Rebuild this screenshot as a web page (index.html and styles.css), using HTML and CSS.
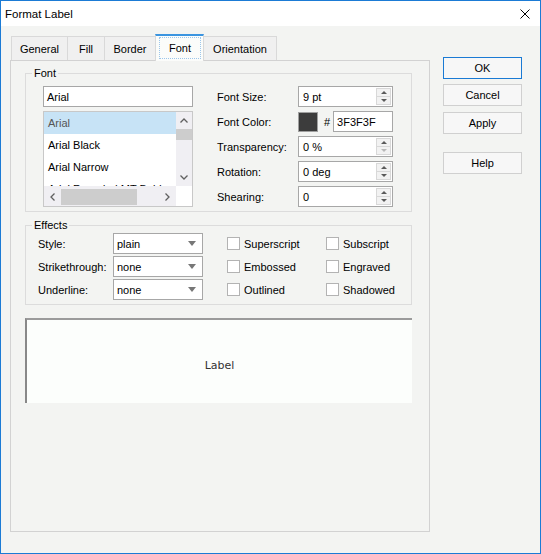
FILE: index.html
```html
<!DOCTYPE html>
<html>
<head>
<meta charset="utf-8">
<link rel="stylesheet" href="styles.css">
</head>
<body>
<div class="window">
  <div class="titlebar">
    <span class="title">Format Label</span>
    <svg class="close" width="10" height="10" viewBox="0 0 10 10"><path d="M0.5 0.5 L9.5 9.5 M9.5 0.5 L0.5 9.5" stroke="#000" stroke-width="1" fill="none"/></svg>
  </div>
  <div class="body">
    <div class="main">
      <div class="tabs">
        <div class="tab tab-general">General</div>
        <div class="tab tab-fill">Fill</div>
        <div class="tab tab-border">Border</div>
        <div class="tab tab-font active"><span class="focus">Font</span></div>
        <div class="tab tab-orient">Orientation</div>
      </div>
      <div class="panel">
        <div class="group group-font">
          <span class="group-title">Font</span>
          <div class="font-left">
            <div class="field">Arial</div>
            <div class="listbox">
              <div class="list-items">
                <div class="item selected">Arial</div>
                <div class="item">Arial Black</div>
                <div class="item">Arial Narrow</div>
                <div class="item">Arial Rounded MT Bold</div>
              </div>
              <div class="vscroll">
                <div class="sb-btn"><svg width="8" height="5" viewBox="0 0 8 5"><polyline points="0.5,4.5 4,1 7.5,4.5" fill="none" stroke="#606060" stroke-width="1.3"/></svg></div>
                <div class="vtrack"><div class="vthumb"></div></div>
                <div class="sb-btn"><svg width="8" height="5" viewBox="0 0 8 5"><polyline points="0.5,0.5 4,4 7.5,0.5" fill="none" stroke="#606060" stroke-width="1.3"/></svg></div>
              </div>
              <div class="hscroll">
                <div class="sb-hbtn"><svg width="5" height="8" viewBox="0 0 5 8"><polyline points="4.5,0.5 1,4 4.5,7.5" fill="none" stroke="#606060" stroke-width="1.3"/></svg></div>
                <div class="htrack"><div class="hthumb"></div></div>
                <div class="sb-hbtn"><svg width="5" height="8" viewBox="0 0 5 8"><polyline points="0.5,0.5 4,4 0.5,7.5" fill="none" stroke="#606060" stroke-width="1.3"/></svg></div>
              </div>
              <div class="corner"></div>
            </div>
          </div>
          <div class="font-right">
            <span class="lbl">Font Size:</span>
            <div class="field spin"><span>9 pt</span><span class="spin-btns"><span class="spin-btn"><span class="tri-up"></span></span><span class="spin-btn"><span class="tri-down"></span></span></span></div>
            <span class="lbl">Font Color:</span>
            <div class="color-row"><span class="swatch"></span><span class="hash">#</span><div class="field hex">3F3F3F</div></div>
            <span class="lbl">Transparency:</span>
            <div class="field spin"><span>0 %</span><span class="spin-btns"><span class="spin-btn"><span class="tri-up"></span></span><span class="spin-btn"><span class="tri-down disabled"></span></span></span></div>
            <span class="lbl">Rotation:</span>
            <div class="field spin"><span>0 deg</span><span class="spin-btns"><span class="spin-btn"><span class="tri-up"></span></span><span class="spin-btn"><span class="tri-down"></span></span></span></div>
            <span class="lbl">Shearing:</span>
            <div class="field spin"><span>0</span><span class="spin-btns"><span class="spin-btn"><span class="tri-up"></span></span><span class="spin-btn"><span class="tri-down"></span></span></span></div>
          </div>
        </div>
        <div class="group group-effects">
          <span class="group-title">Effects</span>
          <span class="lbl">Style:</span>
          <div class="field combo"><span>plain</span><span class="arrow"></span></div>
          <label class="check col3"><span class="box"></span>Superscript</label>
          <label class="check"><span class="box"></span>Subscript</label>
          <span class="lbl">Strikethrough:</span>
          <div class="field combo"><span>none</span><span class="arrow"></span></div>
          <label class="check col3"><span class="box"></span>Embossed</label>
          <label class="check"><span class="box"></span>Engraved</label>
          <span class="lbl">Underline:</span>
          <div class="field combo"><span>none</span><span class="arrow"></span></div>
          <label class="check col3"><span class="box"></span>Outlined</label>
          <label class="check"><span class="box"></span>Shadowed</label>
        </div>
        <div class="preview"><span>Label</span></div>
      </div>
    </div>
    <div class="side">
      <div class="btn btn-ok">OK</div>
      <div class="btn btn-cancel">Cancel</div>
      <div class="btn btn-apply">Apply</div>
      <div class="btn btn-help">Help</div>
    </div>
  </div>
</div>
</body>
</html>
```
FILE: styles.css
```css
html, body {
  margin: 0;
  padding: 0;
}
body {
  font-family: "Liberation Sans", Arial, sans-serif;
  font-size: 11px;
  color: #000;
}
.window {
  width: 541px;
  height: 554px;
  box-sizing: border-box;
  border: 1px solid #1b7bd5;
  background: #f3f4f2;
  display: flex;
  flex-direction: column;
}
.titlebar {
  height: 25px;
  flex: none;
  background: #fff;
  display: flex;
  align-items: center;
  justify-content: space-between;
  padding: 0 10px 0 4px;
}
.title {
  font-size: 11.5px;
}
.close {
  display: block;
}
.body {
  display: flex;
  padding: 8px 0 0 9px;
}
.main {
  width: 420px;
}
.tabs {
  display: flex;
  align-items: flex-end;
  height: 26px;
  padding-left: 1px;
  position: relative;
  z-index: 1;
}
.tab {
  height: 24px;
  box-sizing: border-box;
  border: 1px solid #d9d9d9;
  border-bottom: none;
  background: #f0f0f0;
  display: flex;
  align-items: center;
  justify-content: center;
  margin-left: -1px;
}
.tab:first-child {
  margin-left: 0;
}
.tab-general { width: 57px; }
.tab-fill { width: 38px; }
.tab-border { width: 52px; }
.tab-font { width: 49px; }
.tab-orient { width: 74px; }
.tab.active {
  height: 27px;
  margin-bottom: -1px;
  background: #fbfcfa;
  border-top: 2px solid #3b95e0;
  padding: 1px 2px 2px 3px;
  align-items: stretch;
}
.focus {
  flex: 1;
  border: 1px dotted #9cc6ec;
  display: flex;
  align-items: center;
  justify-content: center;
}
.panel {
  height: 472px;
  box-sizing: border-box;
  border: 1px solid #d2d2d2;
  padding: 12px 0 0 14px;
  background: #f3f4f2;
}
.group {
  position: relative;
  width: 387px;
  box-sizing: border-box;
  border: 1px solid #dcdcdc;
}
.group-title {
  position: absolute;
  left: 6px;
  top: -8px;
  line-height: 14px;
  padding: 0 2px;
  background: #f3f4f2;
}
.group-font {
  display: flex;
  gap: 24px;
  padding: 12px 0 4px 17px;
}
.font-left {
  width: 150px;
  display: flex;
  flex-direction: column;
  gap: 4px;
}
.field {
  height: 21px;
  box-sizing: border-box;
  border: 1px solid #a7a7a7;
  background: #fff;
  display: flex;
  align-items: center;
  padding-left: 3px;
  white-space: nowrap;
}
.listbox {
  height: 96px;
  box-sizing: border-box;
  border: 1px solid #c8c8c8;
  background: #fff;
  display: grid;
  grid-template-columns: 132px 16px;
  grid-template-rows: 74px 20px;
}
.list-items {
  overflow: hidden;
}
.item {
  height: 22px;
  line-height: 22px;
  padding-left: 4px;
  white-space: nowrap;
}
.item.selected {
  background: #c7e3f6;
  color: #555;
}
.vscroll {
  background: #f0eff3;
  display: flex;
  flex-direction: column;
}
.sb-btn {
  height: 17px;
  flex: none;
  display: flex;
  align-items: center;
  justify-content: center;
}
.sb-btn svg, .sb-hbtn svg {
  display: block;
}
.vtrack {
  flex: 1;
}
.vthumb {
  height: 11px;
  background: #cdcdcd;
}
.hscroll {
  background: #f0eff3;
  display: flex;
  align-items: stretch;
}
.sb-hbtn {
  width: 17px;
  flex: none;
  display: flex;
  align-items: center;
  justify-content: center;
  padding-top: 2px;
}
.htrack {
  flex: 1;
  padding-top: 3px;
}
.hthumb {
  margin-left: 0;
  width: 76px;
  height: 16px;
  background: #cdcdcd;
}
.corner {
  background: #fff;
}
.font-right {
  display: grid;
  grid-template-columns: 81px 95px;
  grid-auto-rows: 21px;
  row-gap: 4px;
  align-items: center;
}
.spin {
  justify-content: space-between;
  padding-left: 4px;
  padding-right: 1px;
}
.spin-btns {
  display: flex;
  flex-direction: column;
}
.spin-btn {
  width: 15px;
  height: 9px;
  box-sizing: border-box;
  border: 1px solid #d8d8d8;
  background: #f2f2f2;
  display: flex;
  align-items: center;
  justify-content: center;
}
.spin-btn + .spin-btn {
  margin-top: -1px;
}
.tri-up {
  width: 0;
  height: 0;
  border-left: 3px solid transparent;
  border-right: 3px solid transparent;
  border-bottom: 3px solid #5a5a5a;
}
.tri-down {
  width: 0;
  height: 0;
  border-left: 3px solid transparent;
  border-right: 3px solid transparent;
  border-top: 3px solid #5a5a5a;
}
.tri-down.disabled {
  border-top-color: #b8b8b8;
}
.color-row {
  display: flex;
  align-items: center;
}
.swatch {
  width: 20px;
  height: 20px;
  box-sizing: border-box;
  border: 1px solid #a0a0a0;
  background: #3c3c3c;
}
.hash {
  margin: 0 3px 0 6px;
}
.hex {
  width: 60px;
}
.group-effects {
  margin-top: 13px;
  display: grid;
  grid-template-columns: 75px 90px 123px 1fr;
  grid-auto-rows: 21px;
  row-gap: 2px;
  padding: 7px 0 4px 12px;
  align-items: center;
}
.combo {
  justify-content: space-between;
  padding: 0 6px 0 3px;
}
.arrow {
  width: 0;
  height: 0;
  border-left: 4px solid transparent;
  border-right: 4px solid transparent;
  border-top: 5px solid #777;
}
.check {
  display: flex;
  align-items: center;
  gap: 4px;
}
.col3 {
  padding-left: 24px;
}
.box {
  width: 13px;
  height: 13px;
  box-sizing: border-box;
  border: 1px solid #b3b3b3;
  background: #fff;
}
.preview {
  margin-top: 13px;
  width: 387px;
  height: 85px;
  box-sizing: border-box;
  border-top: 2px solid #9b9b9b;
  border-left: 2px solid #888;
  background: #fcfefc;
  display: flex;
  align-items: center;
  justify-content: center;
  padding-top: 8px;
  font-family: "DejaVu Sans", sans-serif;
  font-size: 11px;
  color: #333;
}
.side {
  margin-left: 13px;
  padding-top: 23px;
  width: 79px;
  display: flex;
  flex-direction: column;
}
.btn {
  height: 22px;
  box-sizing: border-box;
  border: 1px solid #d0d0d0;
  background: #f7f7f7;
  display: flex;
  align-items: center;
  justify-content: center;
}
.btn-ok {
  border-color: #1a7ad4;
}
.btn-cancel {
  margin-top: 5px;
}
.btn-apply {
  margin-top: 6px;
}
.btn-help {
  margin-top: 18px;
}
```
